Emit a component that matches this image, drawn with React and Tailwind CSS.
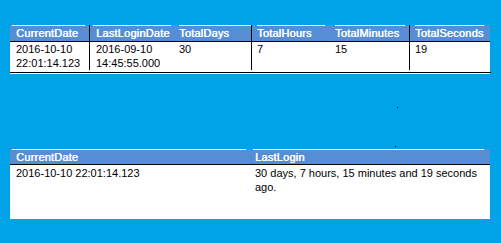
const topCols = [
  { title: 'CurrentDate', lines: ['2016-10-10', '22:01:14.123'], w: 'w-[80px]', line: 'ml-[2px] mr-[4px]', pad: 'pl-[6px]', divider: true },
  { title: 'LastLoginDate', lines: ['2016-09-10', '14:45:55.000'], w: 'w-[83px]', line: 'ml-[3px] mr-[2px]', pad: 'pl-[6px]', divider: false },
  { title: 'TotalDays', lines: ['30'], w: 'w-[79px]', line: 'ml-[6px] mr-0', pad: 'pl-[6px]', divider: true },
  { title: 'TotalHours', lines: ['7'], w: 'w-[77px]', line: 'ml-[5px] mr-[4px]', pad: 'pl-[5px]', divider: false },
  { title: 'TotalMinutes', lines: ['15'], w: 'w-[81px]', line: 'ml-[6px] mr-[4px]', pad: 'pl-[6px]', divider: true },
  { title: 'TotalSeconds', lines: ['19'], w: 'w-[80px]', line: 'ml-[5px] mr-[6px]', pad: 'pl-[5px]', divider: false },
];

const bottomCols = [
  { title: 'CurrentDate', text: '2016-10-10 22:01:14.123', line: 'ml-[2px] mr-[4px]', pad: 'pl-[6px]' },
  { title: 'LastLogin', text: '30 days, 7 hours, 15 minutes and 19 seconds ago.', line: 'ml-[3px] mr-[6px]', pad: 'pl-[5px] pr-[4px]' },
];

// header text is a touch heavier than body text but lighter than bold
const headText = 'text-white whitespace-nowrap tracking-[0.2px] [text-shadow:0.45px_0_0_#ffffff]';

const App = () => {
  return (
    <div className="relative w-[501px] h-[243px] overflow-hidden bg-[#00a2e8] pt-[25px] pl-[10px] font-['Liberation_Sans',Arial,sans-serif] text-[11px] text-black">
      {/* top grid: one column per field */}
      <div className="w-[480px]">
        <div className="flex bg-white">
          {topCols.map((col) => (
            <div
              key={col.title}
              className={`${col.w} flex flex-col ${col.divider ? 'border-r border-black' : ''}`}
            >
              <div className="bg-[#558ed5] border-b border-black">
                <div className={`h-px bg-white ${col.line}`} />
                <div className={`h-[15px] leading-[15px] ${headText} ${col.pad}`}>{col.title}</div>
              </div>
              <div className={`h-[28px] leading-[14px] ${col.pad}`}>
                {col.lines.map((l) => (
                  <div key={l}>{l}</div>
                ))}
              </div>
            </div>
          ))}
        </div>
        <div className="h-[2px] bg-white" />
        <div className="h-px w-[481px] bg-black" />
        <div className="h-px bg-white" />
      </div>

      {/* bottom grid */}
      <div className="mt-[75px] w-[480px] flex bg-white">
        {bottomCols.map((col) => (
          <div key={col.title} className="w-[240px] flex flex-col">
            <div className="bg-[#558ed5] border-b border-black">
              <div className={`h-px bg-white ${col.line}`} />
              <div className={`h-[14px] leading-[14px] ${headText} ${col.pad}`}>{col.title}</div>
            </div>
            <div className={`h-[54px] leading-[14px] pt-[1px] ${col.pad}`}>{col.text}</div>
          </div>
        ))}
      </div>

      {/* stray pixels */}
      <div className="absolute left-[397px] top-[107px] w-px h-px bg-black" />
      <div className="absolute left-[395px] top-[146px] w-px h-px bg-black" />
    </div>
  );
};

export default App;
